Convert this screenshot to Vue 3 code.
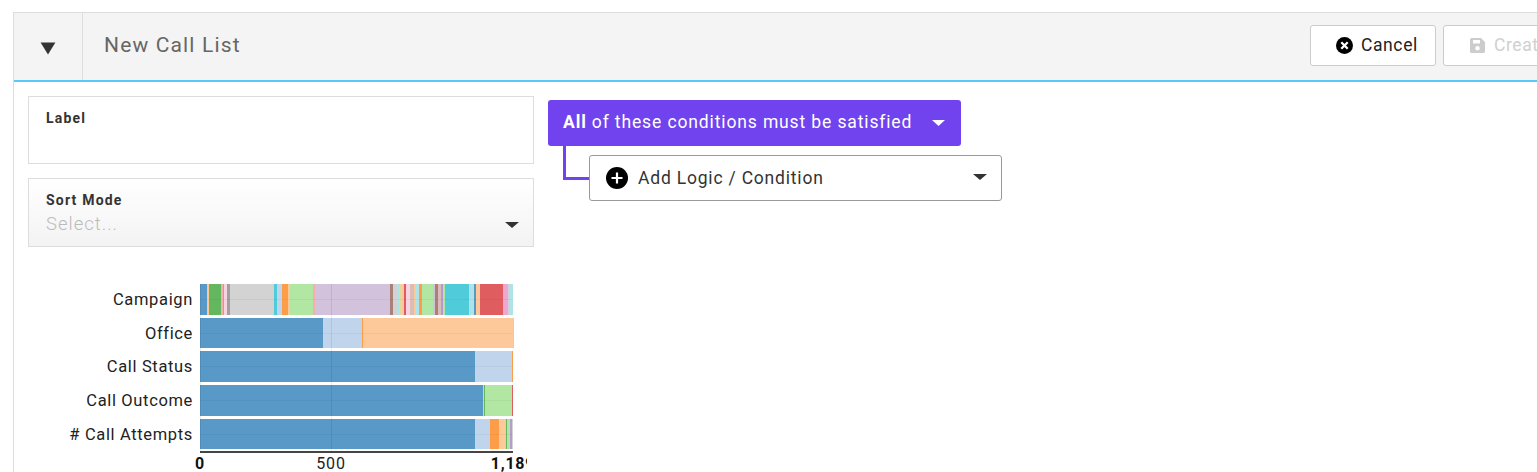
<script setup>
const palette = {
  b: '#5899c7', lb: '#c0d5ec', o: '#fd9d48', lo: '#fec99a', g: '#63b75f', lg: '#b2e6a3',
  r: '#e05d5f', p: '#f7aeb0', v: '#d3c2dc', m: '#b79ad0', br: '#a9817a', lbr: '#d9bdb6',
  pk: '#eea6d2', lpk: '#f8d3e2', dg: '#a0a0a0', gr: '#d3d3d3', c: '#4fcbda', lc: '#aee3ea', y: '#e3d9a0'
}
const seg = (stops) => {
  const out = []
  let prev = 200
  for (const [end, col] of stops) {
    out.push({ w: end - prev, c: palette[col] })
    prev = end
  }
  return out
}
const rows = [
  { label: 'Campaign', segs: seg([[207.3,'b'],[209.3,'lo'],[220.7,'g'],[222.7,'p'],[224.3,'m'],[226.7,'lpk'],[230,'dg'],[274.3,'gr'],[277,'c'],[281.7,'lb'],[288.3,'o'],[290,'lo'],[313.3,'lg'],[315.3,'p'],[390,'v'],[393,'br'],[397.3,'gr'],[399,'lc'],[400.7,'y'],[404,'lo'],[406,'r'],[410,'lpk'],[414,'lbr'],[416,'lo'],[419,'lc'],[422.3,'o'],[433,'lg'],[435,'v'],[438,'br'],[441,'lbr'],[443,'m'],[445,'lg'],[469,'c'],[474,'lc'],[476,'b'],[480,'lo'],[503.3,'r'],[505.3,'pk'],[508.3,'pk'],[510,'gr'],[513,'lc']]) },
  { label: 'Office', segs: seg([[323.3,'b'],[361.7,'lb'],[363.3,'o'],[512.6,'lo'],[513,'lg']]) },
  { label: 'Call Status', segs: seg([[475.4,'b'],[512,'lb'],[513,'o']]) },
  { label: 'Call Outcome', segs: seg([[482.7,'b'],[483.7,'lb'],[484.7,'g'],[512,'lg'],[513,'r']]) },
  { label: '# Call Attempts', segs: seg([[475.4,'b'],[490.3,'lb'],[499.2,'o'],[505.8,'lo'],[507.4,'g'],[509.6,'lg'],[512.4,'m'],[513,'gr']]) }
]
</script>

<template>
  <div class="page">
    <section class="panel">
      <header class="head">
        <div class="toggle">
          <svg width="16" height="13" viewBox="0 0 16 13"><path d="M.6.4h14.8L8 12.6z" fill="#333" /></svg>
        </div>
        <h1 class="title">New Call List</h1>
        <button class="btn cancel">
          <svg width="17" height="17" viewBox="0 0 17 17"><circle cx="8.5" cy="8.5" r="8.5" fill="#000" /><path d="M5.300 5.300l6.400 6.400M11.700 5.300l-6.400 6.400" stroke="#fff" stroke-width="2.300" /></svg>
          <span class="btn-text">Cancel</span>
        </button>
        <button class="btn create">
          <svg width="15" height="15" viewBox="0 0 15 15"><path fill-rule="evenodd" d="M1.5 0H11l4 4v9.5a1.500 1.500 0 0 1-1.500 1.500h-12A1.500 1.500 0 0 1 0 13.500v-12A1.500 1.500 0 0 1 1.500 0zM3 2v3.500h7V2zm4.500 6a2.300 2.300 0 1 0 0 4.600 2.300 2.300 0 0 0 0-4.600z" fill="#ccc" /></svg>
          <span class="btn-text">Create</span>
        </button>
      </header>
      <div class="body">
        <div class="left">
          <div class="field">
            <div class="flabel">Label</div>
          </div>
          <div class="field select">
            <div class="flabel">Sort Mode</div>
            <div class="placeholder">Select...</div>
            <svg class="sel-arrow" width="14" height="6" viewBox="0 0 14 6"><path d="M0 0h14L7 6z" fill="#333" /></svg>
          </div>
          <div class="chart">
            <div class="labels">
              <div v-for="r in rows" :key="r.label" class="rlabel">{{ r.label }}</div>
            </div>
            <div class="plot">
              <div class="bars">
                <div v-for="r in rows" :key="r.label" class="bar">
                  <i v-for="(s, i) in r.segs" :key="i" :style="{ width: s.w + 'px', background: s.c }"></i>
                  <b class="hline"></b>
                </div>
                <b class="grid g0"></b>
                <b class="grid g500"></b>
              </div>
              <div class="axis">
                <span class="tick t0">0</span>
                <span class="tick t500">500</span>
                <span class="tick tmax">1,189</span>
              </div>
            </div>
          </div>
        </div>
        <div class="right">
          <div class="all">
            <span class="all-text"><strong>All</strong> of these conditions must be satisfied</span>
            <svg width="13" height="6" viewBox="0 0 13 6"><path d="M0 0h13L6.500 6z" fill="#fff" /></svg>
          </div>
          <div class="logic">
            <div class="wire"></div>
            <div class="add">
              <svg width="22" height="22" viewBox="0 0 22 22"><circle cx="11" cy="11" r="11" fill="#000" /><path d="M11 5.500v11M5.500 11h11" stroke="#fff" stroke-width="2.200" /></svg>
              <span>Add Logic / Condition</span>
              <svg class="add-arrow" width="14" height="6" viewBox="0 0 14 6"><path d="M0 0h14L7 6z" fill="#333" /></svg>
            </div>
          </div>
        </div>
      </div>
    </section>
  </div>
</template>

<style scoped>
.page {
  width: 1537px;
  height: 472px;
  overflow: hidden;
  padding: 12px 0 0 13px;
  box-sizing: border-box;
  background: #fff;
  font-family: Roboto, "Liberation Sans", sans-serif;
}
.panel {
  width: 1640px;
  height: 520px;
  box-sizing: border-box;
  border: 1px solid #ddd;
  border-bottom: 0;
}
.head {
  display: flex;
  align-items: flex-start;
  height: 67px;
  background: #f4f4f4;
  border-bottom: 2px solid #5bc8f7;
  box-sizing: content-box;
}
.toggle {
  width: 69px;
  height: 100%;
  border-right: 1px solid #ddd;
  display: flex;
  align-items: center;
  justify-content: center;
  padding-top: 4px;
  box-sizing: border-box;
}
.title {
  flex: 1;
  margin: 20px 0 0 21px;
  font-size: 21px;
  line-height: 25px;
  font-weight: 400;
  letter-spacing: 1.150px;
  color: #666;
}
.btn {
  display: flex;
  align-items: center;
  height: 41px;
  margin-top: 12px;
  background: #fff;
  border: 1px solid #ccc;
  border-radius: 3px;
  font: 400 17.500px Roboto, sans-serif;
  letter-spacing: .6px;
  padding: 0;
}
.btn-text {
  position: relative;
  top: -1px;
}
.cancel {
  width: 126px;
  padding-left: 25px;
  gap: 8px;
  color: #222;
  margin-right: 7px;
}
.create {
  width: 150px;
  padding-left: 26px;
  gap: 9px;
  color: #d0d0d0;
  margin-right: 59px;
}
.body {
  display: flex;
  gap: 14px;
  padding: 14px 0 0 14px;
}
.left {
  width: 506px;
}
.field {
  height: 68px;
  box-sizing: border-box;
  border: 1px solid #ddd;
  padding: 12px 17px 0;
  margin-bottom: 14px;
}
.select {
  height: 69px;
  position: relative;
  background: linear-gradient(#fff, #f3f3f3);
  margin-bottom: 0;
}
.flabel {
  font-size: 14px;
  font-weight: 700;
  line-height: 18px;
  letter-spacing: 1.200px;
  color: #333;
}
.placeholder {
  font-size: 18.500px;
  font-weight: 300;
  line-height: 22px;
  letter-spacing: 1px;
  color: #bbb;
  margin-top: 4px;
}
.sel-arrow {
  position: absolute;
  right: 14px;
  top: 43px;
}
.chart {
  display: flex;
  width: 499px;
  overflow: hidden;
  margin-top: 37px;
}
.labels {
  width: 165px;
  flex: none;
  display: flex;
  flex-direction: column;
  gap: 3.200px;
  padding-top: 1px;
}
.rlabel {
  height: 30.500px;
  line-height: 30.500px;
  text-align: right;
  font-size: 16.500px;
  letter-spacing: .65px;
  color: #222;
}
.plot {
  margin-left: 7px;
  flex: none;
  width: 327px;
}
.bars {
  position: relative;
  width: 313px;
  display: flex;
  flex-direction: column;
  gap: 3.200px;
  padding-bottom: 2px;
}
.bar {
  position: relative;
  display: flex;
  height: 30.500px;
}
.bar i {
  display: block;
  flex: none;
  height: 100%;
}
.hline {
  position: absolute;
  left: 0;
  right: 0;
  top: 15px;
  height: 1px;
  background: rgba(0, 0, 0, .04);
}
.grid {
  position: absolute;
  top: 0;
  bottom: 0;
  width: 1px;
  background: rgba(0, 0, 0, .08);
}
.g0 { left: 0; }
.g500 { left: 131px; }
.axis {
  position: relative;
  height: 21px;
  width: 313px;
  border-top: 2px solid #444;
  box-sizing: border-box;
}
.tick {
  position: absolute;
  top: 2px;
  font-size: 16px;
  letter-spacing: .8px;
  line-height: 18px;
  color: #222;
  transform: translateX(-50%);
  white-space: nowrap;
}
.t0 { left: 0; font-weight: 700; color: #111; }
.t500 { left: 131px; }
.tmax { left: 313px; font-weight: 700; color: #111; }
.right {
  padding-top: 4px;
}
.all {
  width: 413px;
  height: 46px;
  box-sizing: border-box;
  background: #7043ee;
  border-radius: 3px;
  color: #fff;
  display: flex;
  align-items: center;
  justify-content: space-between;
  padding: 0 16px 0 15px;
  font-size: 17.500px;
  letter-spacing: .87px;
}
.all-text {
  position: relative;
  top: -1px;
}
.logic {
  display: flex;
  align-items: flex-start;
}
.wire {
  width: 26px;
  height: 34px;
  margin-left: 15px;
  box-sizing: border-box;
  border-left: 3px solid #7043ee;
  border-bottom: 3px solid #7043ee;
}
.add {
  width: 413px;
  height: 46px;
  margin-top: 9px;
  box-sizing: border-box;
  background: #fff;
  border: 1px solid #999;
  border-radius: 3px;
  display: flex;
  align-items: center;
  padding: 0 14px 0 16px;
  gap: 10px;
  font-size: 17.500px;
  letter-spacing: .8px;
  color: #333;
}
.add-arrow {
  margin-left: auto;
  margin-top: -3px;
}
</style>

<style>
html, body { margin: 0; overflow: hidden; background: #fff; }
</style>
